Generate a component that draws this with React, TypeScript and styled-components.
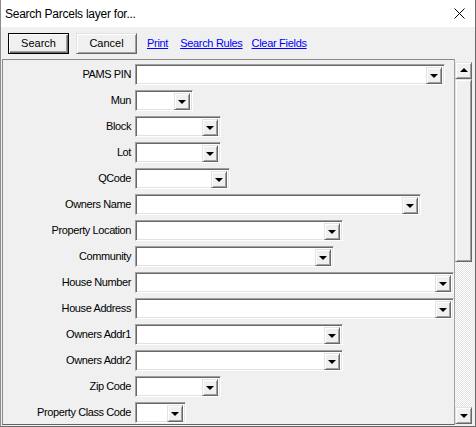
import React from "react";
import styled, { createGlobalStyle, css } from "styled-components";

const GlobalStyle = createGlobalStyle`
  html, body {
    margin: 0;
    padding: 0;
    background: #3a3a3a;
  }
`;

const raised = css`
  border: 1px solid;
  border-color: #e3e3e3 #696969 #696969 #e3e3e3;
  box-shadow: inset 1px 1px 0 #ffffff, inset -1px -1px 0 #a0a0a0;
  background: #f0f0f0;
  box-sizing: border-box;
`;

const Window = styled.div`
  width: 476px;
  height: 427px;
  box-sizing: border-box;
  display: flex;
  flex-direction: column;
  background: #f0f0f0;
  border-left: 1px solid #8c8c8c;
  border-right: 1px solid #6a6a6a;
  border-bottom: 1px solid #6a6a6a;
  font-family: "Liberation Sans", Arial, sans-serif;
  color: #000;
`;

const TitleBar = styled.div`
  height: 27px;
  flex: none;
  background: #ffffff;
  display: flex;
  align-items: center;
  justify-content: space-between;
  padding: 0 10px 0 4px;
`;

const Title = styled.div`
  font-size: 12px;
  letter-spacing: -0.25px;
`;

const Toolbar = styled.div`
  height: 32px;
  flex: none;
  display: flex;
  align-items: center;
  padding-left: 7px;
`;

const Button = styled.button<{ $default?: boolean }>`
  width: 61px;
  height: 21px;
  margin-right: 7px;
  padding: 0;
  font-family: inherit;
  font-size: 11px;
  color: #000;
  ${raised};
  ${(p) =>
    p.$default &&
    css`
      border-color: #000;
      box-shadow: inset 1px 1px 0 #ffffff, inset -1px -1px 0 #696969,
        inset -2px -2px 0 #a0a0a0;
    `}
`;

const Link = styled.a<{ $gap: number }>`
  font-size: 11px;
  letter-spacing: -0.3px;
  color: #0000ff;
  text-decoration: underline;
  margin-left: ${(p) => p.$gap}px;
  cursor: pointer;
`;

const Body = styled.div`
  flex: 1;
  display: flex;
  margin: 0 3px 1px 1px;
  min-height: 0;
`;

const FormPanel = styled.div`
  width: 453px;
  flex: none;
  box-sizing: border-box;
  border-top: 1px solid #8a8a8a;
  border-left: 1px solid #8a8a8a;
  border-right: 1px solid #a0a0a0;
  border-bottom: 1px solid #646464;
  padding-top: 4px;
  display: flex;
  flex-direction: column;
  gap: 5px;
`;

const Row = styled.div`
  display: flex;
  align-items: center;
  height: 21px;
`;

const Label = styled.div`
  width: 128px;
  margin-right: 4px;
  margin-top: -2px;
  text-align: right;
  font-size: 11px;
  white-space: nowrap;
  letter-spacing: -0.4px;
`;

const Combo = styled.div<{ $w: number }>`
  width: ${(p) => p.$w}px;
  height: 21px;
  flex: none;
  box-sizing: border-box;
  background: #ffffff;
  border: 1px solid;
  border-color: #a0a0a0 #ffffff #ffffff #a0a0a0;
  box-shadow: inset 1px 1px 0 #696969, inset -1px -1px 0 #e3e3e3;
  display: flex;
  justify-content: flex-end;
  padding: 2px;
  position: relative;
  z-index: 1;
`;

const DropButton = styled.div`
  width: 16px;
  height: 17px;
  ${raised};
  display: flex;
  align-items: center;
  justify-content: center;
`;

const Arrow = styled.div<{ $up?: boolean }>`
  width: 0;
  height: 0;
  border-left: 4px solid transparent;
  border-right: 4px solid transparent;
  ${(p) =>
    p.$up
      ? css`
          border-bottom: 4px solid #000;
          margin-bottom: 1px;
        `
      : css`
          border-top: 4px solid #000;
          margin-top: 1px;
        `}
`;

const ScrollBar = styled.div`
  width: 17px;
  flex: none;
  display: flex;
  flex-direction: column;
  padding-top: 3px;
  padding-bottom: 1px;
  box-sizing: border-box;
`;

const ScrollButton = styled.div`
  height: 17px;
  flex: none;
  ${raised};
  display: flex;
  align-items: center;
  justify-content: center;
`;

const Thumb = styled.div`
  height: 183px;
  flex: none;
  ${raised};
`;

const Track = styled.div`
  flex: 1;
  background: repeating-conic-gradient(#ffffff 0 25%, #e4e4e4 0 50%) 0 0 / 2px
    2px;
`;

const fields: [string, number][] = [
  ["PAMS PIN", 310],
  ["Mun", 58],
  ["Block", 86],
  ["Lot", 86],
  ["QCode", 95],
  ["Owners Name", 286],
  ["Property Location", 208],
  ["Community", 199],
  ["House Number", 319],
  ["House Address", 319],
  ["Owners Addr1", 208],
  ["Owners Addr2", 208],
  ["Zip Code", 86],
  ["Property Class Code", 51],
];

const CloseIcon = () => (
  <svg width="11" height="11" viewBox="0 0 11 11">
    <path d="M0.5 0.5 L10.5 10.5 M10.5 0.5 L0.5 10.5" stroke="#000" strokeWidth="1" />
  </svg>
);

export default function App() {
  return (
    <>
      <GlobalStyle />
      <Window>
        <TitleBar>
          <Title>Search Parcels layer for...</Title>
          <CloseIcon />
        </TitleBar>
        <Toolbar>
          <Button $default>Search</Button>
          <Button>Cancel</Button>
          <Link $gap={3}>Print</Link>
          <Link $gap={12}>Search Rules</Link>
          <Link $gap={9}>Clear Fields</Link>
        </Toolbar>
        <Body>
          <FormPanel>
            {fields.map(([label, w]) => (
              <Row key={label}>
                <Label>{label}</Label>
                <Combo $w={w}>
                  <DropButton>
                    <Arrow />
                  </DropButton>
                </Combo>
              </Row>
            ))}
          </FormPanel>
          <ScrollBar>
            <ScrollButton>
              <Arrow $up />
            </ScrollButton>
            <Thumb />
            <Track />
            <ScrollButton>
              <Arrow />
            </ScrollButton>
          </ScrollBar>
        </Body>
      </Window>
    </>
  );
}
